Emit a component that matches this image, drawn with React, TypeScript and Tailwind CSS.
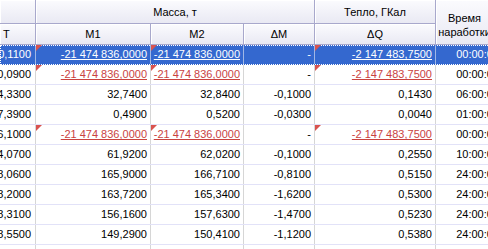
type Cell = { text: string; err?: boolean }

const rows: { c0: string; m1: Cell; m2: Cell; dm: string; dq: Cell; t: string }[] = [
  { c0: '10,1100', m1: { text: '-21 474 836,0000', err: true }, m2: { text: '-21 474 836,0000', err: true }, dm: '-', dq: { text: '-2 147 483,7500', err: true }, t: '00:00:00' },
  { c0: '10,0900', m1: { text: '-21 474 836,0000', err: true }, m2: { text: '-21 474 836,0000', err: true }, dm: '-', dq: { text: '-2 147 483,7500', err: true }, t: '00:00:00' },
  { c0: '14,3300', m1: { text: '32,7400' }, m2: { text: '32,8400' }, dm: '-0,1000', dq: { text: '0,1430' }, t: '06:00:00' },
  { c0: '17,3900', m1: { text: '0,4900' }, m2: { text: '0,5200' }, dm: '-0,0300', dq: { text: '0,0040' }, t: '01:00:00' },
  { c0: '16,1000', m1: { text: '-21 474 836,0000', err: true }, m2: { text: '-21 474 836,0000', err: true }, dm: '-', dq: { text: '-2 147 483,7500', err: true }, t: '00:00:00' },
  { c0: '14,0700', m1: { text: '61,9200' }, m2: { text: '62,0200' }, dm: '-0,1000', dq: { text: '0,2550' }, t: '10:00:00' },
  { c0: '18,0600', m1: { text: '165,9000' }, m2: { text: '166,7100' }, dm: '-0,8100', dq: { text: '0,5150' }, t: '24:00:00' },
  { c0: '18,2000', m1: { text: '163,7200' }, m2: { text: '165,3400' }, dm: '-1,6200', dq: { text: '0,5300' }, t: '24:00:00' },
  { c0: '18,3100', m1: { text: '156,1600' }, m2: { text: '157,6300' }, dm: '-1,4700', dq: { text: '0,5230' }, t: '24:00:00' },
  { c0: '18,5500', m1: { text: '149,2900' }, m2: { text: '150,4100' }, dm: '-1,1200', dq: { text: '0,5380' }, t: '24:00:00' },
  { c0: '18,4400', m1: { text: '148,1100' }, m2: { text: '149,2200' }, dm: '-1,1100', dq: { text: '0,5100' }, t: '24:00:00' },
]

const head =
  'flex items-center justify-center border-r border-b border-[#a8a8cc] bg-gradient-to-b from-[#fbfbfe] to-[#e9e9f3] shadow-[inset_1px_1px_0_#ffffff]'

function Flag() {
  return (
    <span className="absolute left-0 top-0 h-0 w-0 border-t-[6px] border-r-[6px] border-t-[#d9534f] border-r-transparent" />
  )
}

function Val({ cell, sel, w }: { cell: Cell; sel: boolean; w: string }) {
  const lineCls = sel ? 'border-r-[#9fb6e6]' : 'border-r-[#d6d6d6]'
  return (
    <div className={`relative flex ${w} shrink-0 items-center justify-end overflow-hidden whitespace-nowrap border-r pr-[3px] ${lineCls}`}>
      {cell.err && <Flag />}
      <span className={cell.err ? (sel ? 'text-white underline' : 'text-[#c9433f] underline') : ''}>{cell.text}</span>
    </div>
  )
}

export default function App() {
  return (
    <div className="h-[249px] w-[488px] overflow-hidden bg-white text-[11px] text-black" style={{ fontFamily: '"Liberation Sans", Arial, sans-serif' }}>
      <div className="w-[508px]">
        {/* header */}
        <div className="flex h-[45px]">
          <div className="flex w-[36px] shrink-0 flex-col">
            <div className={`${head} h-[24px]`} />
            <div className={`${head} h-[21px] justify-start overflow-hidden pl-[3px]`}>Т</div>
          </div>
          <div className="flex w-[279px] shrink-0 flex-col">
            <div className={`${head} h-[24px] pt-[2px]`}>Масса, т</div>
            <div className="flex h-[21px]">
              <div className={`${head} w-[115px]`}>M1</div>
              <div className={`${head} w-[93px]`}>M2</div>
              <div className={`${head} w-[71px]`}>ΔM</div>
            </div>
          </div>
          <div className="flex w-[121px] shrink-0 flex-col">
            <div className={`${head} h-[24px] pt-[2px]`}>Тепло, ГКал</div>
            <div className={`${head} h-[21px]`}>ΔQ</div>
          </div>
          <div className={`${head} w-[72px] shrink-0 pr-[14px] pt-[5px] text-center leading-[14px]`}>
            Время
            <br />
            наработки
          </div>
        </div>

        {/* rows */}
        {rows.map((r, i) => {
          const sel = i === 0
          const lineCls = sel ? 'border-r-[#9fb6e6]' : 'border-r-[#d6d6d6]'
          return (
            <div
              key={i}
              className={`flex h-[20px] border-b ${sel ? 'border-b-[#3468cf] bg-[#3468cf] text-white outline-1 -outline-offset-1 outline-dotted outline-white' : 'border-b-[#e2e2f8]'}`}
            >
              <div className={`flex w-[36px] shrink-0 items-center justify-end overflow-hidden whitespace-nowrap border-r pr-[4px] ${lineCls}`}>
                {r.c0}
              </div>
              <Val cell={r.m1} sel={sel} w="w-[115px]" />
              <Val cell={r.m2} sel={sel} w="w-[93px]" />
              <Val cell={{ text: r.dm }} sel={sel} w="w-[71px]" />
              <Val cell={r.dq} sel={sel} w="w-[121px]" />
              <div className={`flex w-[72px] shrink-0 items-center justify-end whitespace-nowrap border-r pr-[8px] ${lineCls}`}>{r.t}</div>
            </div>
          )
        })}
      </div>
    </div>
  )
}
